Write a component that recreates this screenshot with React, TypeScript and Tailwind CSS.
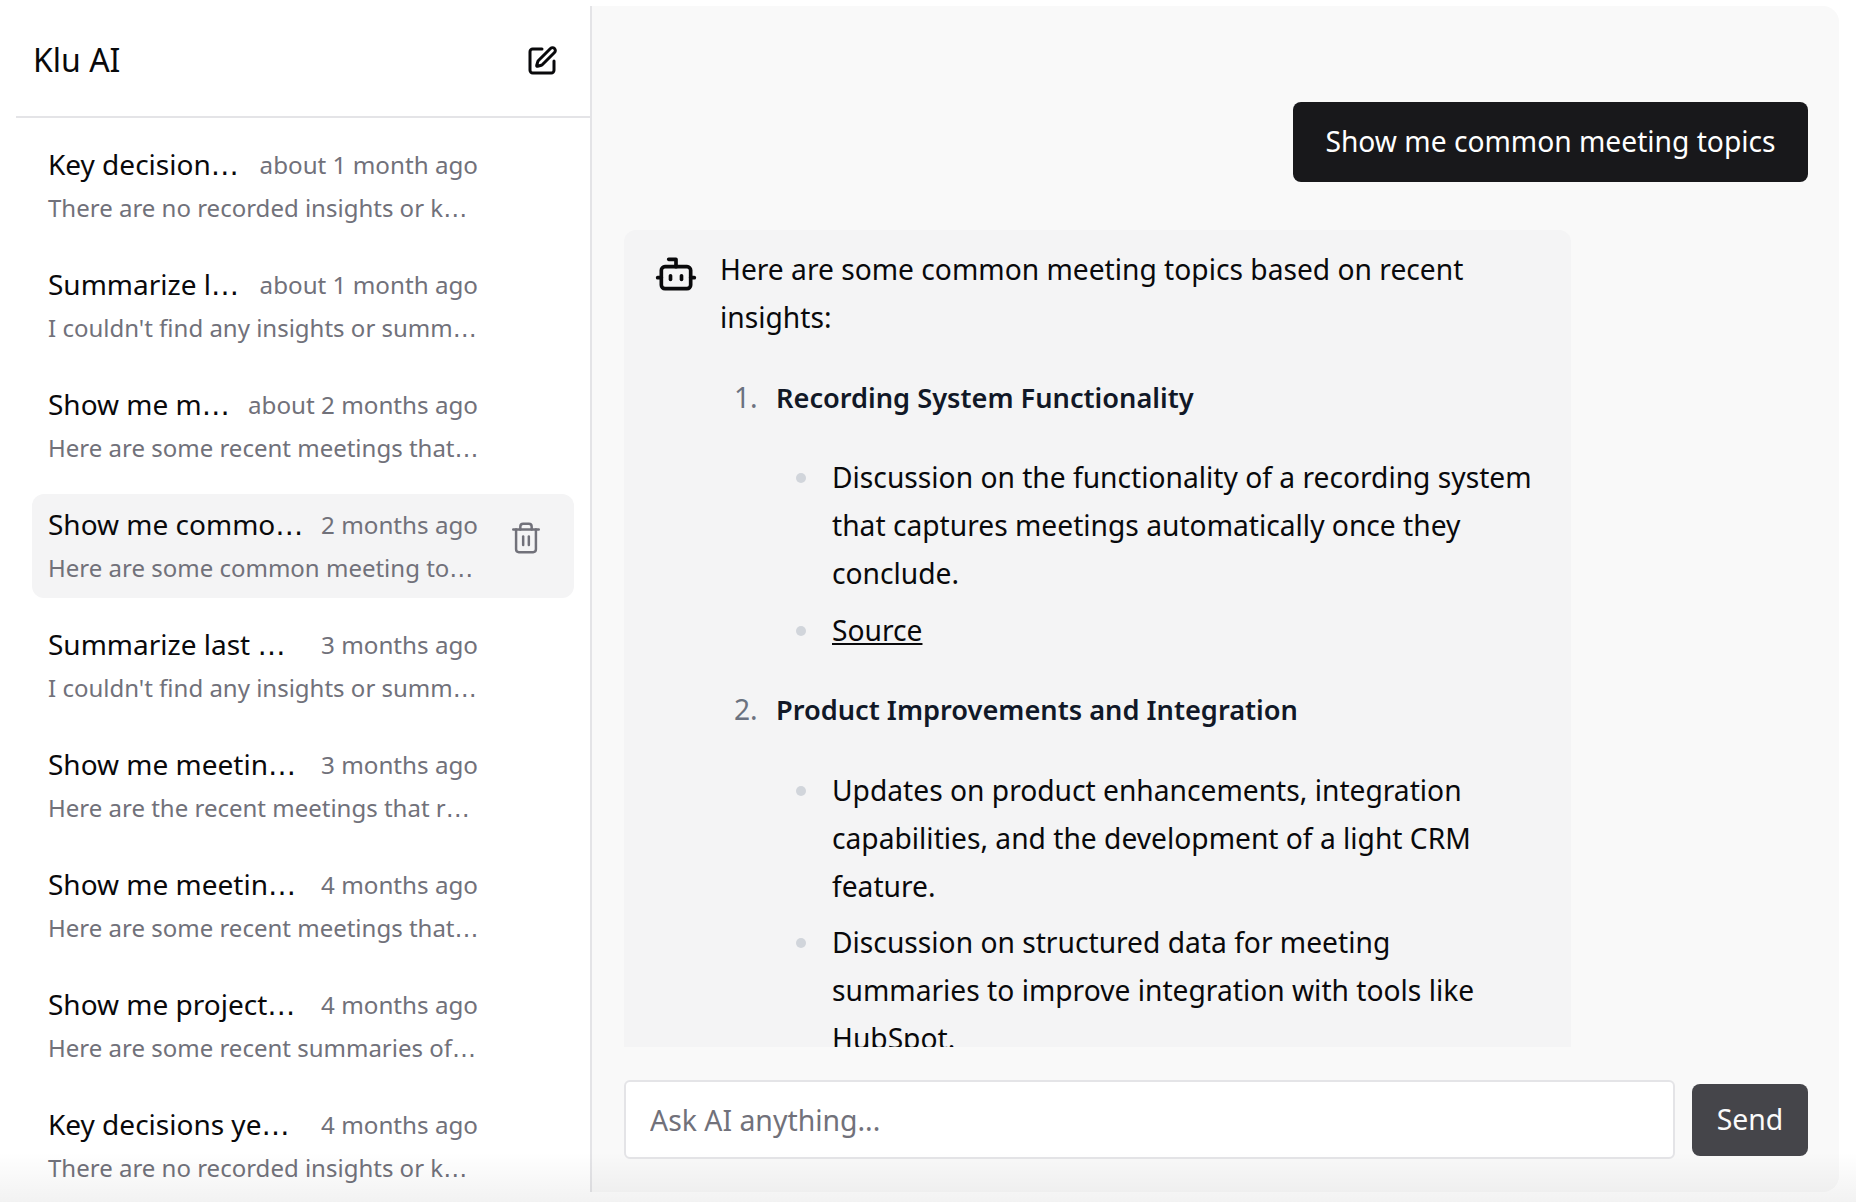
import { SquarePen, Trash2, Bot } from "lucide-react";

const rows = [
  ["Key decision", "about 1 month ago", "There are no recorded insights or k"],
  ["Summarize l", "about 1 month ago", "I couldn't find any insights or summ"],
  ["Show me m", "about 2 months ago", "Here are some recent meetings that"],
  ["Show me commo", "2 months ago", "Here are some common meeting to"],
  ["Summarize last ", "3 months ago", "I couldn't find any insights or summ"],
  ["Show me meetin", "3 months ago", "Here are the recent meetings that r"],
  ["Show me meetin", "4 months ago", "Here are some recent meetings that"],
  ["Show me project", "4 months ago", "Here are some recent summaries of"],
  ["Key decisions ye", "4 months ago", "There are no recorded insights or k"],
];

function Dots() {
  return <span className="font-['DejaVu_Sans',sans-serif]">…</span>;
}

export default function App() {
  return (
    <div className="relative flex h-[1202px] w-full overflow-hidden bg-white pt-[6px] pb-[10px] pr-[17px] font-['Noto_Sans',sans-serif] text-[#09090b]">
      <aside className="flex w-[592px] shrink-0 flex-col border-r-2 border-[#e4e4e7]">
        <header className="ml-4 flex h-[112px] shrink-0 items-center justify-between border-b-2 border-[#e4e4e7] pl-[17px] pr-[32px]">
          <h1 className="-mt-[2px] text-[32px] leading-none">Klu AI</h1>
          <SquarePen size={32} strokeWidth={2.25} color="#09090b" />
        </header>
        <nav className="flex flex-col gap-4 pl-8 pt-4">
          {rows.map((r, i) => (
            <div key={i} className={`relative h-[104px] w-[542px] shrink-0 rounded-xl p-4 ${i === 3 ? "bg-[#f4f4f5]" : ""}`}>
              <div className="flex h-8 w-[430px] items-center justify-between whitespace-pre">
                <span className="-mt-[2px] text-[28px] leading-8">{r[0]}<Dots /></span>
                <span className="-mt-[3px] text-[24.2px] leading-8 text-[#71717a]">{r[1]}</span>
              </div>
              <p className="mt-[10px] whitespace-pre text-[24px] leading-8 text-[#71717a]">{r[2]}<Dots /></p>
              {i === 3 && <Trash2 size={34} strokeWidth={1.75} color="#71717a" className="absolute right-[31px] top-[27px]" />}
            </div>
          ))}
        </nav>
      </aside>
      <main className="flex min-w-0 flex-1 flex-col rounded-r-2xl bg-[#f9f9f9] pl-8 pr-[31px] pt-[96px] pb-[33px]">
        <div className="flex h-20 w-[515px] shrink-0 items-center justify-center self-end rounded-lg bg-[#18181b] text-[28.2px] text-white">
          <span className="-mt-[2px]">Show me common meeting topics</span>
        </div>
        <div className="mt-12 flex h-[817px] w-[947px] shrink-0 gap-[22px] overflow-hidden rounded-t-xl bg-[#f4f4f5] pl-[30px] pr-[35px] pt-[15px] text-[28.2px] leading-[48px]">
          <Bot size={44} strokeWidth={2} color="#09090b" className="mt-[7px] shrink-0" />
          <div className="min-w-0 flex-1">
            <p>Here are some common meeting topics based on recent insights:</p>
            <ol className="mt-8 list-decimal pl-[45px] marker:text-[#6b7280]">
              <li className="pl-[11px]">
                <strong className="text-[27.2px] font-semibold text-[#111827]">Recording System Functionality</strong>
                <ul className="mt-[31px] list-disc pl-[47px] marker:text-[#d1d5db]">
                  <li className="pl-[9px]">Discussion on the functionality of a recording system that captures meetings automatically once they conclude.</li>
                  <li className="mt-[9px] pl-[9px]"><span className="underline">Source</span></li>
                </ul>
              </li>
              <li className="mt-[31px] pl-[11px]">
                <strong className="text-[27.2px] font-semibold text-[#111827]">Product Improvements and Integration</strong>
                <ul className="mt-8 list-disc pl-[47px] marker:text-[#d1d5db]">
                  <li className="pl-[9px]">Updates on product enhancements, integration capabilities, and the development of a light CRM feature.</li>
                  <li className="mt-2 pl-[9px]">Discussion on structured data for meeting summaries to improve integration with tools like HubSpot.</li>
                </ul>
              </li>
            </ol>
          </div>
        </div>
        <div className="mt-[33px] flex h-[79px] shrink-0 items-center gap-[17px]">
          <input readOnly placeholder="Ask AI anything..." className="h-[79px] w-[1051px] rounded-md border-2 border-[#e4e4e7] bg-white px-6 text-[28.4px] outline-none placeholder:text-[#71717a]" />
          <button className="h-[72px] w-[116px] rounded-lg bg-[#45454a] text-[28.4px] text-[#fafafa]">Send</button>
        </div>
      </main>
      <div className="pointer-events-none absolute inset-x-0 bottom-0 h-[50px] bg-gradient-to-b from-transparent to-black/5" />
    </div>
  );
}
